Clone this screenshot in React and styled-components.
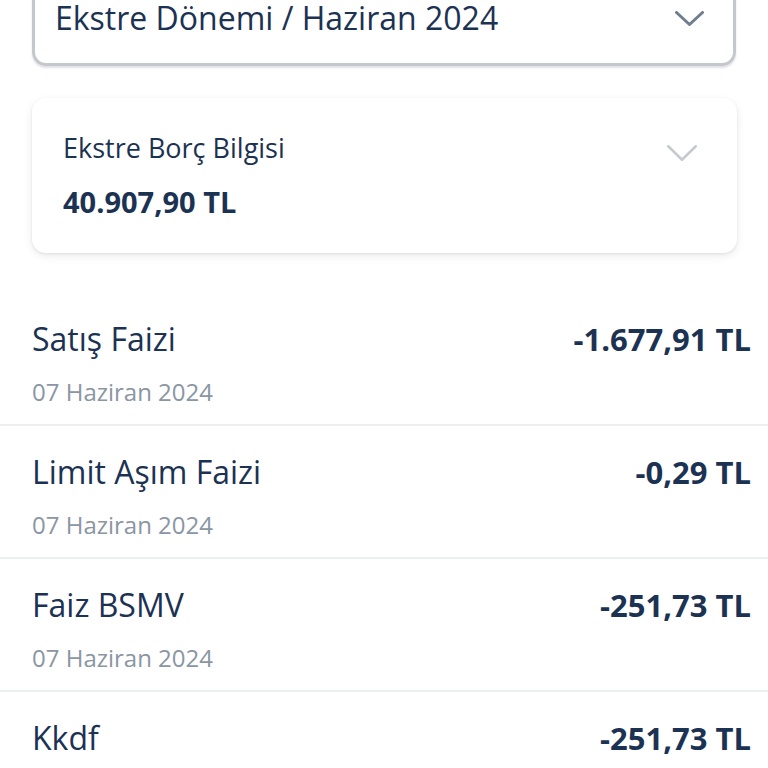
import React from "react";
import styled, { createGlobalStyle } from "styled-components";

const GlobalStyle = createGlobalStyle`
  html, body {
    margin: 0;
    padding: 0;
    background: #ffffff;
    overflow: hidden;
  }
  body {
    font-family: "Open Sans", "Noto Sans", sans-serif;
    color: #1c3253;
  }
`;

const Page = styled.div`
  width: 768px;
  height: 768px;
  overflow: hidden;
  background: #fff;
`;

const Scroll = styled.div`
  margin-top: -32px;
  display: flex;
  flex-direction: column;
`;

const Top = styled.div`
  padding: 0 32px;
  display: flex;
  flex-direction: column;
  gap: 32px;
`;

const Select = styled.div`
  height: 98px;
  width: 704px;
  box-sizing: border-box;
  border: 3px solid #c4c8ce;
  border-radius: 14px;
  box-shadow: 0 2px 2px rgba(0, 0, 0, 0.12);
  display: flex;
  align-items: center;
  justify-content: space-between;
  padding: 0 29px 0 20px;
`;

const SelectText = styled.span`
  font-size: 32px;
  line-height: 34px;
  font-weight: 500;
  color: #1c3253;
  margin-top: 2px;
`;

const Chevron = ({ color, width = 29, height = 15, stroke = 3 }) => (
  <svg width={width} height={height} viewBox={`0 0 ${width} ${height}`} fill="none">
    <path
      d={`M${stroke / 2} ${stroke / 2} L${width / 2} ${height - stroke / 2} L${width - stroke / 2} ${stroke / 2}`}
      stroke={color}
      strokeWidth={stroke}
      strokeLinecap="round"
      strokeLinejoin="round"
    />
  </svg>
);

const ChevronWrap = styled.div`
  display: flex;
  margin-top: ${(p) => p.$top || 0}px;
`;

const Card = styled.div`
  width: 705px;
  height: 155px;
  box-sizing: border-box;
  border-radius: 14px;
  background: #fff;
  box-shadow: 0 1px 3px rgba(0, 0, 0, 0.08), 0 3px 10px rgba(0, 0, 0, 0.08);
  padding: 32px 40px 0 31px;
  display: flex;
  justify-content: space-between;
  align-items: flex-start;
`;

const CardInfo = styled.div`
  display: flex;
  flex-direction: column;
  gap: 17px;
`;

const CardLabel = styled.div`
  font-size: 27px;
  line-height: 36px;
  font-weight: 500;
`;

const CardValue = styled.div`
  font-size: 29px;
  line-height: 38px;
  font-weight: 700;
`;

const List = styled.div`
  margin-top: 40px;
  display: flex;
  flex-direction: column;
`;

const Row = styled.div`
  padding: 26px 17px 17px 32px;
  border-bottom: 2px solid #eceef1;
  display: flex;
  justify-content: space-between;
  align-items: flex-start;
`;

const RowMain = styled.div`
  display: flex;
  flex-direction: column;
  gap: 18px;
`;

const RowTitle = styled.div`
  font-size: 32px;
  line-height: 40px;
  font-weight: 500;
  color: #1c3253;
`;

const RowDate = styled.div`
  font-size: 24px;
  line-height: 30px;
  font-weight: 500;
  color: #8a96a3;
`;

const Amount = styled.div`
  font-size: 31px;
  line-height: 40px;
  font-weight: 700;
  color: #1c3253;
`;

const rows = [
  { title: "Satış Faizi", date: "07 Haziran 2024", amount: "-1.677,91 TL" },
  { title: "Limit Aşım Faizi", date: "07 Haziran 2024", amount: "-0,29 TL" },
  { title: "Faiz BSMV", date: "07 Haziran 2024", amount: "-251,73 TL" },
  { title: "Kkdf", date: "07 Haziran 2024", amount: "-251,73 TL" },
];

export default function App() {
  return (
    <Page>
      <GlobalStyle />
      <Scroll>
        <Top>
          <Select>
            <SelectText>Ekstre Dönemi / Haziran 2024</SelectText>
            <ChevronWrap $top={2}>
              <Chevron color="#6f7d8c" />
            </ChevronWrap>
          </Select>
          <Card>
            <CardInfo>
              <CardLabel>Ekstre Borç Bilgisi</CardLabel>
              <CardValue>40.907,90 TL</CardValue>
            </CardInfo>
            <ChevronWrap $top={15}>
              <Chevron color="#c6cad0" width={30} height={16} stroke={2.5} />
            </ChevronWrap>
          </Card>
        </Top>
        <List>
          {rows.map((r, i) => (
            <Row key={i}>
              <RowMain>
                <RowTitle>{r.title}</RowTitle>
                <RowDate>{r.date}</RowDate>
              </RowMain>
              <Amount>{r.amount}</Amount>
            </Row>
          ))}
        </List>
      </Scroll>
    </Page>
  );
}
